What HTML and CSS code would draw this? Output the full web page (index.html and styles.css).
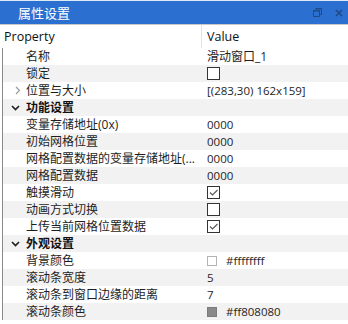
FILE: index.html
```html
<!DOCTYPE html>
<html lang="zh">
<head>
<meta charset="utf-8">
<title>属性设置</title>
<link rel="stylesheet" href="styles.css">
</head>
<body>
<div class="panel">
  <div class="titlebar">
    <span class="title">属性设置</span>
    <span class="tools">
      <svg class="ico" width="9" height="9" viewBox="0 0 9 9"><path d="M2.5 0.5h6v6h-2M0.5 2.5h6v6h-6z" fill="none" stroke="currentColor" stroke-width="1"/><path d="M2.5 1h6M0.5 3h6" stroke="currentColor" stroke-width="1.2"/></svg>
      <svg class="ico" width="8" height="8" viewBox="0 0 8 8"><path d="M1 1l6 6M7 1l-6 6" stroke="currentColor" stroke-width="1.6"/></svg>
    </span>
  </div>
  <div class="header">
    <div class="hcell hprop">Property</div>
    <div class="hcell hval">Value</div>
  </div>
  <div class="tree">
    <div class="row"><span class="arrow"></span><span class="label">名称</span><span class="value cjk">滑动窗口_1</span></div>
    <div class="row alt"><span class="arrow"></span><span class="label">锁定</span><span class="value"><span class="check"></span></span></div>
    <div class="row"><span class="arrow"><svg width="6" height="9" viewBox="0 0 6 9"><path d="M1 1l3.5 3.5L1 8" fill="none" stroke="#9a9a9a" stroke-width="1.2"/></svg></span><span class="label">位置与大小</span><span class="value">[(283,30) 162x159]</span></div>
    <div class="row alt group"><span class="arrow down"><svg width="9" height="6" viewBox="0 0 9 6"><path d="M1 1l3.5 3.5L8 1" fill="none" stroke="#222" stroke-width="1.7"/></svg></span><span class="label">功能设置</span><span class="value"></span></div>
    <div class="row"><span class="arrow"></span><span class="label">变量存储地址(0x)</span><span class="value">0000</span></div>
    <div class="row alt"><span class="arrow"></span><span class="label">初始网格位置</span><span class="value">0000</span></div>
    <div class="row"><span class="arrow"></span><span class="label">网格配置数据的变量存储地址(...</span><span class="value">0000</span></div>
    <div class="row alt"><span class="arrow"></span><span class="label">网格配置数据</span><span class="value">0000</span></div>
    <div class="row"><span class="arrow"></span><span class="label">触摸滑动</span><span class="value"><span class="check on"><svg width="11" height="11" viewBox="0 0 11 11"><path d="M2 5.5l2.5 2.5L9.5 3" fill="none" stroke="#555" stroke-width="1.1"/></svg></span></span></div>
    <div class="row alt"><span class="arrow"></span><span class="label">动画方式切换</span><span class="value"><span class="check"></span></span></div>
    <div class="row"><span class="arrow"></span><span class="label">上传当前网格位置数据</span><span class="value"><span class="check on"><svg width="11" height="11" viewBox="0 0 11 11"><path d="M2 5.5l2.5 2.5L9.5 3" fill="none" stroke="#555" stroke-width="1.1"/></svg></span></span></div>
    <div class="row alt group"><span class="arrow down"><svg width="9" height="6" viewBox="0 0 9 6"><path d="M1 1l3.5 3.5L8 1" fill="none" stroke="#222" stroke-width="1.7"/></svg></span><span class="label">外观设置</span><span class="value"></span></div>
    <div class="row"><span class="arrow"></span><span class="label">背景颜色</span><span class="value"><span class="swatch white"></span>#ffffffff</span></div>
    <div class="row alt"><span class="arrow"></span><span class="label">滚动条宽度</span><span class="value">5</span></div>
    <div class="row"><span class="arrow"></span><span class="label">滚动条到窗口边缘的距离</span><span class="value">7</span></div>
    <div class="row alt"><span class="arrow"></span><span class="label">滚动条颜色</span><span class="value"><span class="swatch gray"></span>#ff808080</span></div>
  </div>
</div>
</body>
</html>
```
FILE: styles.css
```css
html, body {
  margin: 0;
  padding: 0;
  background: #ffffff;
}
body {
  font-family: "Open Sans", "Noto Sans CJK SC", sans-serif;
  font-size: 12px;
  color: #1e1e1e;
}
.panel {
  width: 348px;
  height: 324px;
  overflow: hidden;
  background: #ffffff;
}
.titlebar {
  height: 23px;
  border-top: 1px solid #dfe8f5;
  border-bottom: 1px solid #c9c9c9;
  background: #2b6fd1;
  display: flex;
  align-items: center;
  justify-content: space-between;
  padding: 0 5px 0 18px;
}
.title {
  color: #ffffff;
  font-family: "Noto Sans CJK SC", sans-serif;
  font-size: 13px;
  line-height: 23px;
}
.tools {
  display: flex;
  align-items: center;
  gap: 13px;
  color: #1f4a86;
}
.ico { display: block; }
.header {
  height: 23px;
  display: grid;
  grid-template-columns: 202px 1fr;
}
.hcell {
  line-height: 23px;
  font-size: 12.5px;
  color: #111;
}
.hprop {
  padding-left: 4px;
  border-right: 1px solid #e2e2e2;
}
.hval { padding-left: 5px; }
.tree {
  margin-left: 2px;
  border-left: 1px solid #8a8a8a;
}
.row {
  height: 17px;
  display: grid;
  grid-template-columns: 23px 176px 1fr;
  align-items: center;
  background: #ffffff;
}
.row.alt { background: #f2f2f2; }
.arrow {
  display: flex;
  align-items: center;
  justify-content: center;
  height: 17px;
  padding-left: 6px;
}
.arrow.down { padding-left: 2px; }
.arrow svg { display: block; }
.label {
  white-space: nowrap;
  overflow: hidden;
  line-height: 17px;
}
.group .label {
  font-weight: bold;
  color: #111;
}
.value {
  padding-left: 5px;
  display: flex;
  align-items: center;
  line-height: 17px;
  white-space: nowrap;
  font-size: 11.5px;
}
.value.cjk { font-size: 12px; }
.check {
  width: 11px;
  height: 11px;
  border: 1px solid #333;
  background: #fff;
  display: block;
}
.check svg { display: block; }
.swatch {
  width: 8px;
  height: 8px;
  margin-right: 9px;
  display: block;
}
.swatch.white {
  border: 1px solid #b4b4b4;
  background: #ffffff;
}
.swatch.gray {
  border: 1px solid #7c7c7c;
  background: #8a8a8a;
}
```
